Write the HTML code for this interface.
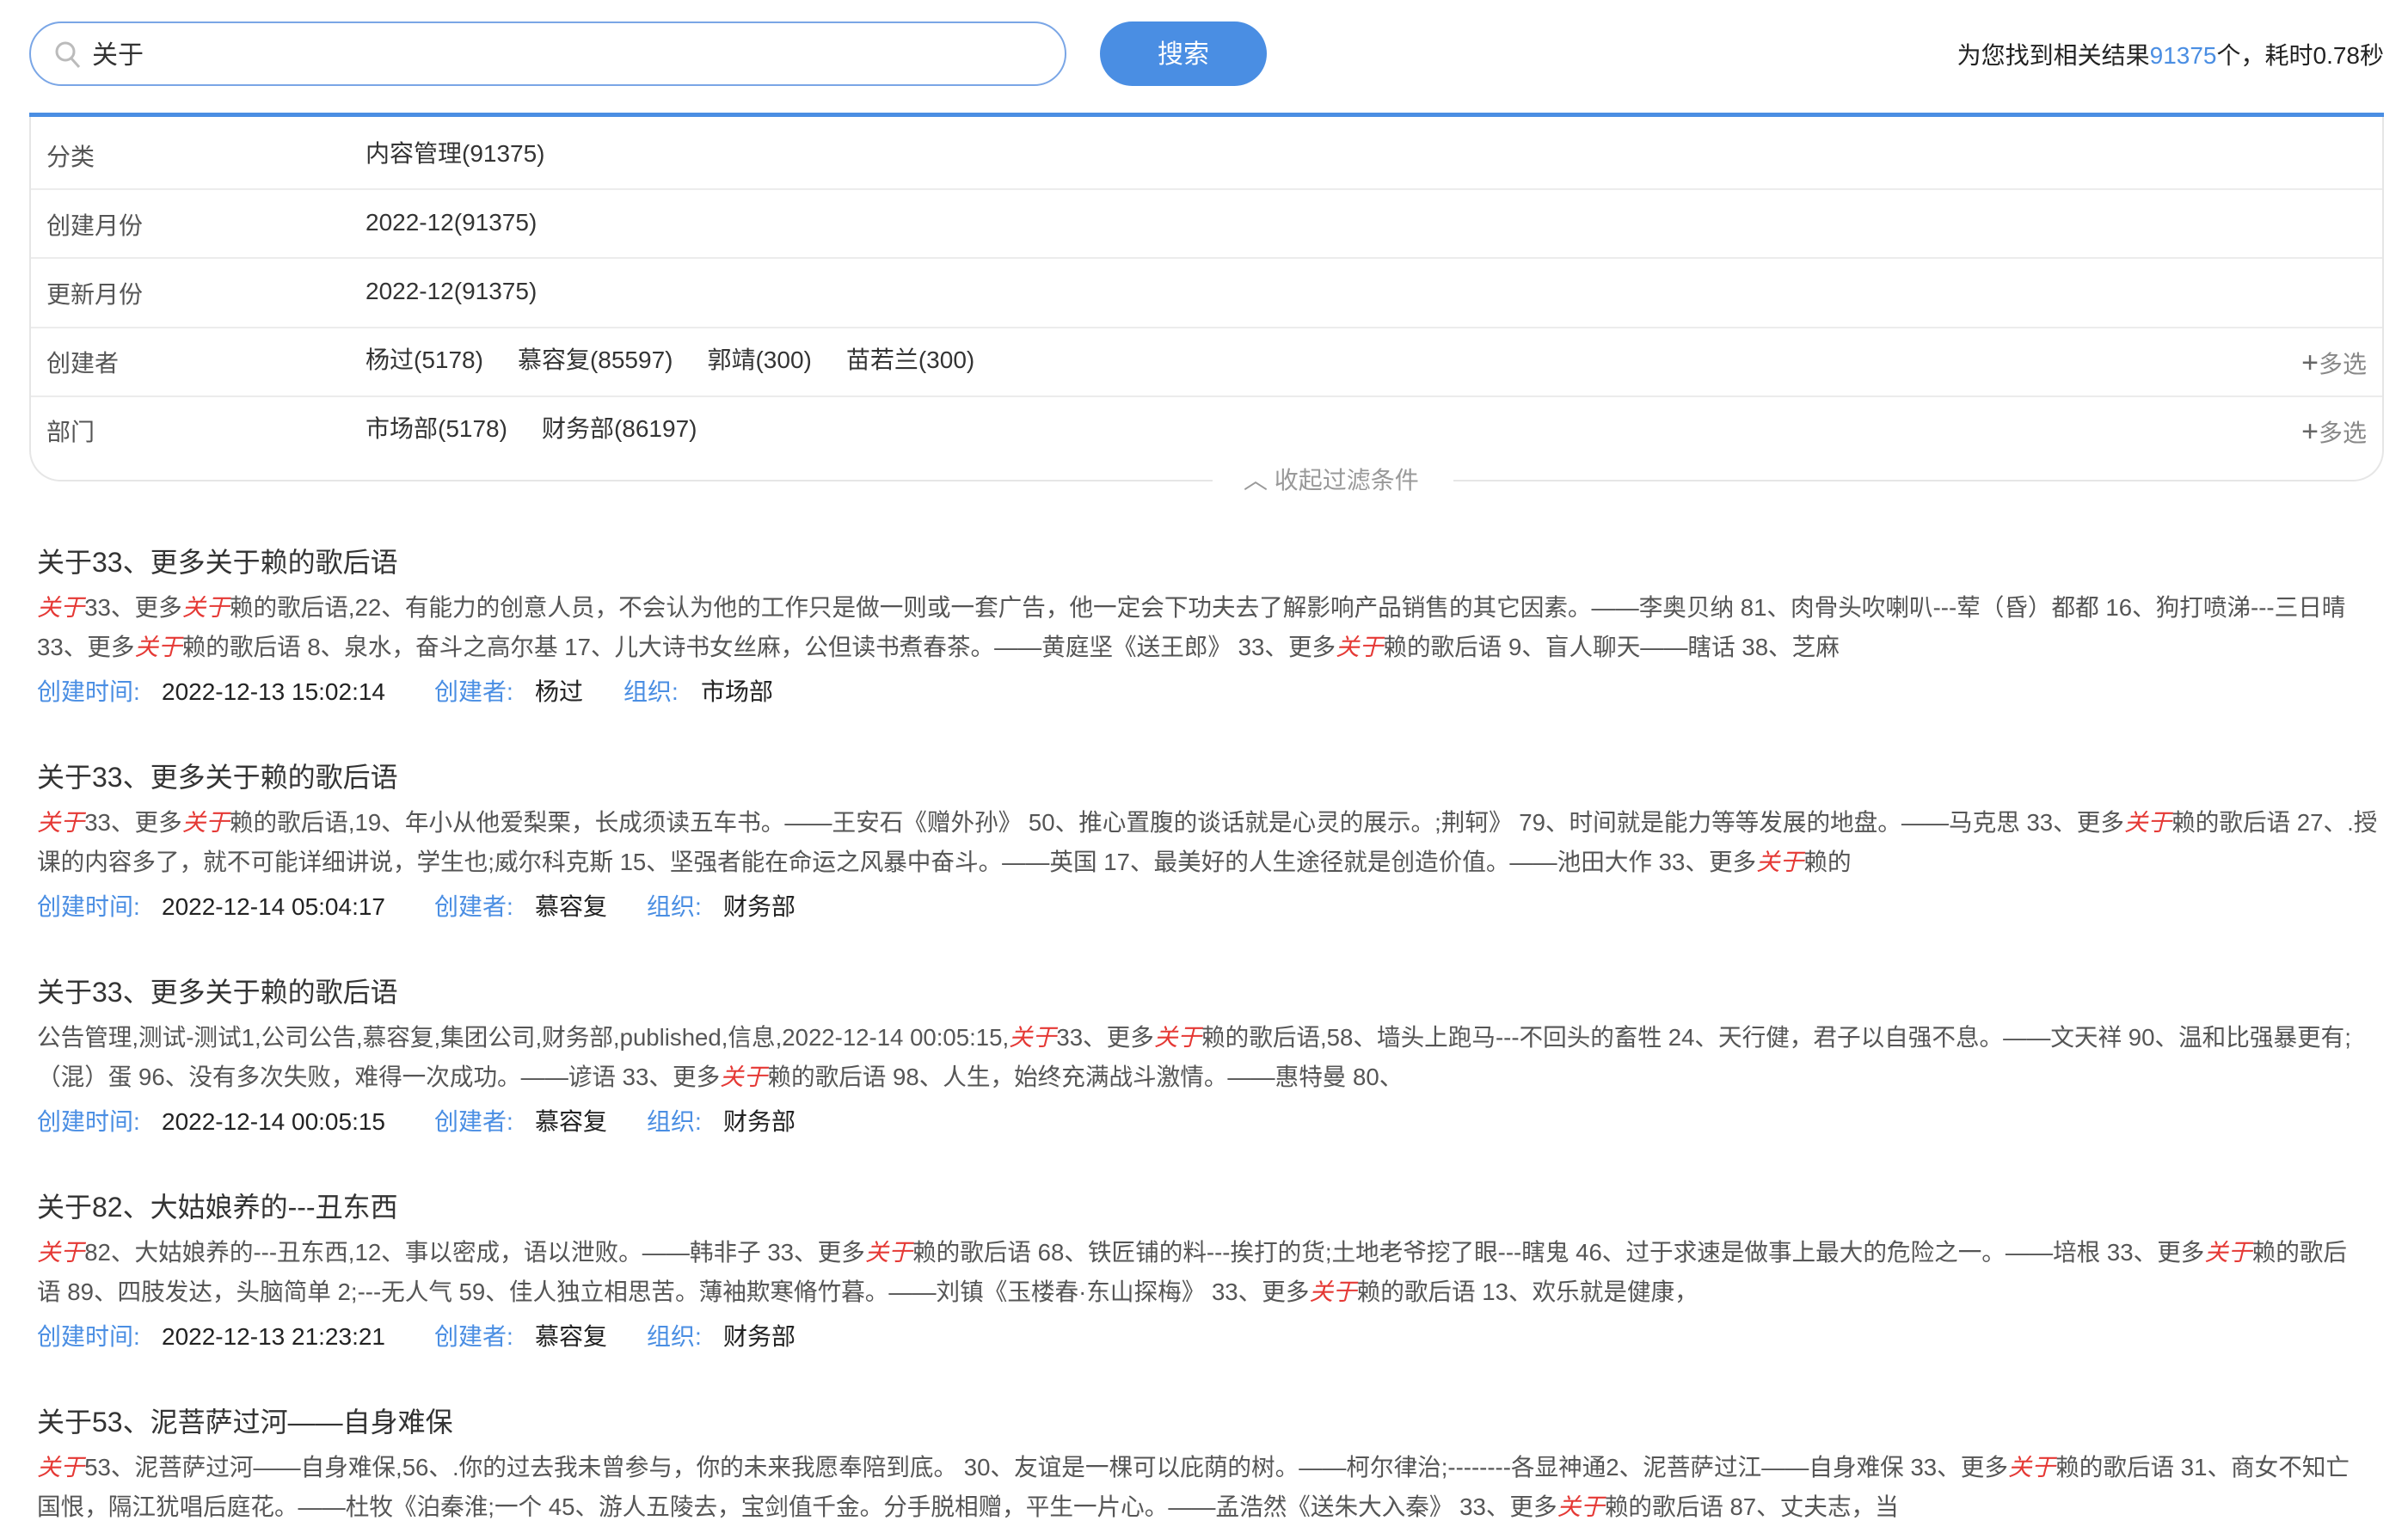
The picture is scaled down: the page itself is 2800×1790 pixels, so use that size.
<!DOCTYPE html>
<html><head><meta charset="utf-8">
<style>
*{margin:0;padding:0;box-sizing:border-box}
body{width:2800px;height:1790px;background:#fff;position:relative;overflow:hidden;font-family:"Liberation Sans","Noto Sans CJK SC",sans-serif;color:#333}
.abs{position:absolute;white-space:nowrap;line-height:1}
.input{position:absolute;left:34px;top:25px;width:1206px;height:75px;border:2px solid #7aa6e6;border-radius:38px}
.btn{position:absolute;left:1279px;top:25px;width:194px;height:75px;background:#4a8ee3;border-radius:38px;color:#fff;font-size:30px;text-align:center;line-height:77px}
.bar{position:absolute;left:34px;top:131px;width:2738px;height:5px;background:#4a8ee3}
.box{position:absolute;left:34px;top:136px;width:2738px;height:424px;border:2px solid #e6e6e6;border-top:none;border-radius:0 0 36px 36px}
.sep{position:absolute;left:36px;width:2734px;height:2px;background:#ececec}
.lbl{font-size:28px;color:#555}
.val{font-size:28px;color:#333}
.more{font-size:28px;color:#888}
.more b{font-weight:normal;font-size:34px;color:#666}
.t{font-size:32px;color:#333}
.c{font-size:27.6px;color:#555}
.c i{color:#e53935;font-style:italic}
.ml{font-size:28px;color:#4a8ee3}
.mv{font-size:28px;color:#222}
</style></head><body>
<div class="input"></div>
<svg class="abs" style="left:62px;top:46px" width="34" height="36" viewBox="0 0 34 36"><circle cx="14" cy="14" r="10" fill="none" stroke="#bbb" stroke-width="3"/><line x1="21" y1="22" x2="30" y2="32" stroke="#bbb" stroke-width="3"/></svg>
<div class="abs" style="left:107px;top:50px;font-size:30px;color:#333">关于</div>
<div class="btn">搜索</div>
<div class="abs" style="right:28px;top:51px;font-size:28px;color:#222">为您找到相关结果<span style="color:#4a8ee3">91375</span>个，耗时0.78秒</div>

<div class="bar"></div>
<div class="box"></div>
<div class="sep" style="top:219px"></div>
<div class="sep" style="top:299px"></div>
<div class="sep" style="top:380px"></div>
<div class="sep" style="top:460px"></div>
<div style="position:absolute;left:1410px;top:549px;width:280px;height:20px;background:#fff"></div>

<div class="abs lbl" style="left:54px;top:169px">分类</div>
<div class="abs val" style="left:425px;top:165px">内容管理(91375)</div>
<div class="abs lbl" style="left:54px;top:249px">创建月份</div>
<div class="abs val" style="left:425px;top:245px">2022-12(91375)</div>
<div class="abs lbl" style="left:54px;top:329px">更新月份</div>
<div class="abs val" style="left:425px;top:325px">2022-12(91375)</div>
<div class="abs lbl" style="left:54px;top:409px">创建者</div>
<div class="abs val" style="left:425px;top:405px">杨过(5178)<span style="margin-left:40px">慕容复(85597)</span><span style="margin-left:40px">郭靖(300)</span><span style="margin-left:40px">苗若兰(300)</span></div>
<div class="abs more" style="right:48px;top:405px"><b>+</b>多选</div>
<div class="abs lbl" style="left:54px;top:489px">部门</div>
<div class="abs val" style="left:425px;top:485px">市场部(5178)<span style="margin-left:40px">财务部(86197)</span></div>
<div class="abs more" style="right:48px;top:485px"><b>+</b>多选</div>
<div class="abs" style="left:1446px;top:545px;font-size:28px;color:#999">︿ 收起过滤条件</div>

<!-- result 1 -->
<div class="abs t" style="left:43px;top:638px">关于33、更多关于赖的歌后语</div>
<div class="abs c" style="left:43px;top:693px"><i>关于</i>33、更多<i>关于</i>赖的歌后语,22、有能力的创意人员，不会认为他的工作只是做一则或一套广告，他一定会下功夫去了解影响产品销售的其它因素。——李奥贝纳 81、肉骨头吹喇叭---荤（昏）都都 16、狗打喷涕---三日晴</div>
<div class="abs c" style="left:43px;top:739px">33、更多<i>关于</i>赖的歌后语 8、泉水，奋斗之高尔基 17、儿大诗书女丝麻，公但读书煮春茶。——黄庭坚《送王郎》 33、更多<i>关于</i>赖的歌后语 9、盲人聊天——瞎话 38、芝麻</div>
<div class="abs ml" style="left:43px;top:791px">创建时间:</div><div class="abs mv" style="left:188px;top:791px">2022-12-13 15:02:14</div>
<div class="abs ml" style="left:505px;top:791px">创建者:</div><div class="abs mv" style="left:622px;top:791px">杨过</div>
<div class="abs ml" style="left:725px;top:791px">组织:</div><div class="abs mv" style="left:815px;top:791px">市场部</div>

<!-- result 2 -->
<div class="abs t" style="left:43px;top:888px">关于33、更多关于赖的歌后语</div>
<div class="abs c" style="left:43px;top:943px"><i>关于</i>33、更多<i>关于</i>赖的歌后语,19、年小从他爱梨栗，长成须读五车书。——王安石《赠外孙》 50、推心置腹的谈话就是心灵的展示。;荆轲》 79、时间就是能力等等发展的地盘。——马克思 33、更多<i>关于</i>赖的歌后语 27、.授</div>
<div class="abs c" style="left:43px;top:989px">课的内容多了，就不可能详细讲说，学生也;威尔科克斯 15、坚强者能在命运之风暴中奋斗。——英国 17、最美好的人生途径就是创造价值。——池田大作 33、更多<i>关于</i>赖的</div>
<div class="abs ml" style="left:43px;top:1041px">创建时间:</div><div class="abs mv" style="left:188px;top:1041px">2022-12-14 05:04:17</div>
<div class="abs ml" style="left:505px;top:1041px">创建者:</div><div class="abs mv" style="left:622px;top:1041px">慕容复</div>
<div class="abs ml" style="left:752px;top:1041px">组织:</div><div class="abs mv" style="left:841px;top:1041px">财务部</div>

<!-- result 3 -->
<div class="abs t" style="left:43px;top:1138px">关于33、更多关于赖的歌后语</div>
<div class="abs c" style="left:43px;top:1193px">公告管理,测试-测试1,公司公告,慕容复,集团公司,财务部,published,信息,2022-12-14 00:05:15,<i>关于</i>33、更多<i>关于</i>赖的歌后语,58、墙头上跑马---不回头的畜牲 24、天行健，君子以自强不息。——文天祥 90、温和比强暴更有;</div>
<div class="abs c" style="left:43px;top:1239px">（混）蛋 96、没有多次失败，难得一次成功。——谚语 33、更多<i>关于</i>赖的歌后语 98、人生，始终充满战斗激情。——惠特曼 80、</div>
<div class="abs ml" style="left:43px;top:1291px">创建时间:</div><div class="abs mv" style="left:188px;top:1291px">2022-12-14 00:05:15</div>
<div class="abs ml" style="left:505px;top:1291px">创建者:</div><div class="abs mv" style="left:622px;top:1291px">慕容复</div>
<div class="abs ml" style="left:752px;top:1291px">组织:</div><div class="abs mv" style="left:841px;top:1291px">财务部</div>

<!-- result 4 -->
<div class="abs t" style="left:43px;top:1388px">关于82、大姑娘养的---丑东西</div>
<div class="abs c" style="left:43px;top:1443px"><i>关于</i>82、大姑娘养的---丑东西,12、事以密成，语以泄败。——韩非子 33、更多<i>关于</i>赖的歌后语 68、铁匠铺的料---挨打的货;土地老爷挖了眼---瞎鬼 46、过于求速是做事上最大的危险之一。——培根 33、更多<i>关于</i>赖的歌后</div>
<div class="abs c" style="left:43px;top:1489px">语 89、四肢发达，头脑简单 2;---无人气 59、佳人独立相思苦。薄袖欺寒脩竹暮。——刘镇《玉楼春·东山探梅》 33、更多<i>关于</i>赖的歌后语 13、欢乐就是健康，</div>
<div class="abs ml" style="left:43px;top:1541px">创建时间:</div><div class="abs mv" style="left:188px;top:1541px">2022-12-13 21:23:21</div>
<div class="abs ml" style="left:505px;top:1541px">创建者:</div><div class="abs mv" style="left:622px;top:1541px">慕容复</div>
<div class="abs ml" style="left:752px;top:1541px">组织:</div><div class="abs mv" style="left:841px;top:1541px">财务部</div>

<!-- result 5 -->
<div class="abs t" style="left:43px;top:1638px">关于53、泥菩萨过河——自身难保</div>
<div class="abs c" style="left:43px;top:1693px"><i>关于</i>53、泥菩萨过河——自身难保,56、.你的过去我未曾参与，你的未来我愿奉陪到底。 30、友谊是一棵可以庇荫的树。——柯尔律治;--------各显神通2、泥菩萨过江——自身难保 33、更多<i>关于</i>赖的歌后语 31、商女不知亡</div>
<div class="abs c" style="left:43px;top:1739px">国恨，隔江犹唱后庭花。——杜牧《泊秦淮;一个 45、游人五陵去，宝剑值千金。分手脱相赠，平生一片心。——孟浩然《送朱大入秦》 33、更多<i>关于</i>赖的歌后语 87、丈夫志，当</div>
</body></html>
